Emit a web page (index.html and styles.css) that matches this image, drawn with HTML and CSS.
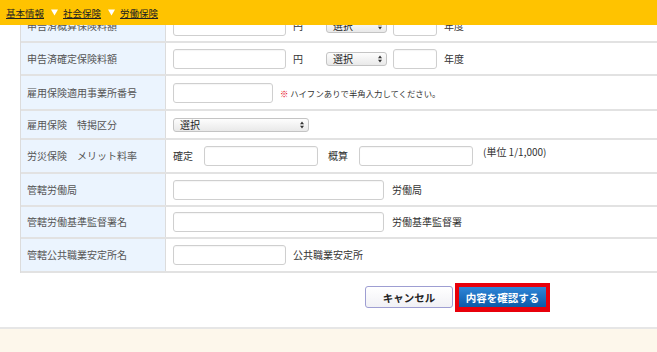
FILE: index.html
```html
<!DOCTYPE html>
<html lang="ja">
<head>
    <meta charset="UTF-8">
    <meta name="viewport" content="width=device-width, initial-scale=1.0">
    <title>労働保険</title>
    <link rel="stylesheet" href="styles.css">
</head>
<body>
    <header class="topbar">
        <nav class="crumbs">
            <a href="#">基本情報</a>
            <svg class="crumb-arrow" viewBox="0 0 8 7"><path d="M0 0H8L4 7Z" fill="#fff"/></svg>
            <a href="#">社会保険</a>
            <svg class="crumb-arrow" viewBox="0 0 8 7"><path d="M0 0H8L4 7Z" fill="#fff"/></svg>
            <a href="#">労働保険</a>
        </nav>
    </header>

    <main class="page">
        <div class="form-table">
            <div class="row h33">
                <div class="label">申告済概算保険料額</div>
                <div class="value">
                    <span class="field w113"></span>
                    <span class="unit">円</span>
                    <span class="select w61 ml-select"><span>選択</span><svg viewBox="0 0 5 9"><path d="M2.5 0L5 3.5H0ZM2.5 9L0 5.5H5Z" fill="#333"/></svg></span>
                    <span class="field w44 ml6"></span>
                    <span class="unit">年度</span>
                </div>
            </div>
            <div class="row h33">
                <div class="label">申告済確定保険料額</div>
                <div class="value">
                    <span class="field w113"></span>
                    <span class="unit">円</span>
                    <span class="select w61 ml-select"><span>選択</span><svg viewBox="0 0 5 9"><path d="M2.5 0L5 3.5H0ZM2.5 9L0 5.5H5Z" fill="#333"/></svg></span>
                    <span class="field w44 ml6"></span>
                    <span class="unit">年度</span>
                </div>
            </div>
            <div class="row h35">
                <div class="label">雇用保険適用事業所番号</div>
                <div class="value">
                    <span class="field w100"></span>
                    <span class="note"><em>※</em> ハイフンありで半角入力してください。</span>
                </div>
            </div>
            <div class="row h29">
                <div class="label">雇用保険　特掲区分</div>
                <div class="value">
                    <span class="select w136"><span>選択</span><svg viewBox="0 0 5 9"><path d="M2.5 0L5 3.5H0ZM2.5 9L0 5.5H5Z" fill="#333"/></svg></span>
                </div>
            </div>
            <div class="row h34">
                <div class="label">労災保険　メリット料率</div>
                <div class="value">
                    <span class="caption">確定</span>
                    <span class="field w114 ml11"></span>
                    <span class="caption ml10">概算</span>
                    <span class="field w114 ml11"></span>
                    <span class="caption ml10 raised">(単位 1/1,000)</span>
                </div>
            </div>
            <div class="row h33">
                <div class="label">管轄労働局</div>
                <div class="value">
                    <span class="field w211"></span>
                    <span class="unit ml8">労働局</span>
                </div>
            </div>
            <div class="row h32">
                <div class="label">管轄労働基準監督署名</div>
                <div class="value">
                    <span class="field w211"></span>
                    <span class="unit ml8">労働基準監督署</span>
                </div>
            </div>
            <div class="row h34">
                <div class="label">管轄公共職業安定所名</div>
                <div class="value">
                    <span class="field w113"></span>
                    <span class="unit">公共職業安定所</span>
                </div>
            </div>
        </div>

        <div class="actions">
            <button class="btn-cancel">キャンセル</button>
            <button class="btn-confirm">内容を確認する</button>
        </div>
    </main>

    <footer class="footer"></footer>
</body>
</html>
```

FILE: styles.css
```css
body {
    margin: 0;
    font-family: "Noto Sans CJK JP", "Noto Sans", sans-serif;
    color: #333;
    background: #fff;
    overflow: hidden;
}

/* top bar */
.topbar {
    position: fixed;
    top: 0;
    left: 0;
    right: 0;
    height: 25px;
    background: #ffc300;
    display: flex;
    align-items: center;
    padding-left: 6px;
    z-index: 10;
}
.crumbs {
    display: flex;
    align-items: center;
    font-size: 9.5px;
    line-height: 12px;
}
.crumbs a {
    color: #222;
    text-decoration: underline;
}
.crumb-arrow {
    width: 7px;
    height: 7px;
    margin: 0 5px 0 7px;
}

/* form */
.page {
    margin: 10px 0 0 20px;
}
.form-table {
    border-left: 1px solid #dcdcdc;
}
.row {
    display: flex;
    box-sizing: border-box;
    border-bottom: 2px solid #e2e2e2;
}
.h29 { height: 29px; }
.h32 { height: 32px; }
.h33 { height: 33px; }
.h34 { height: 34px; }
.h35 { height: 35px; }

.label {
    width: 145px;
    flex-shrink: 0;
    box-sizing: border-box;
    background: #ebf4fe;
    border-right: 1px solid #dcdcdc;
    display: flex;
    align-items: center;
    padding-left: 6px;
    font-size: 10px;
    line-height: 12px;
    color: #555;
    white-space: pre;
}
.value {
    flex: 1;
    display: flex;
    align-items: center;
    padding-left: 7px;
    font-size: 10px;
    line-height: 12px;
    color: #333;
}

.field {
    display: block;
    height: 20px;
    box-sizing: border-box;
    border: 1px solid #cfcfcf;
    border-radius: 3px;
    background: #fff;
    box-shadow: inset 0 1px 1px rgba(0, 0, 0, 0.04);
}
.w44 { width: 44px; }
.w61 { width: 61px; }
.w100 { width: 100px; }
.w113 { width: 113px; }
.w114 { width: 114px; }
.w136 { width: 136px; }
.w211 { width: 211px; }

.ml6 { margin-left: 6px; }
.ml8 { margin-left: 8px !important; }
.ml10 { margin-left: 10px; }
.ml11 { margin-left: 11px; }
.ml-select { margin-left: 23px; }

.unit {
    margin-left: 7px;
}
.caption.raised {
    align-self: flex-start;
    margin-top: 6px;
}

.select {
    display: flex;
    align-items: center;
    justify-content: space-between;
    height: 14px;
    box-sizing: border-box;
    border: 1px solid #c4c4c4;
    border-radius: 3px;
    background: linear-gradient(#fdfdfd, #e9e9e9);
    padding: 0 4px 0 6px;
    font-size: 10px;
    line-height: 12px;
    color: #222;
}
.select svg {
    width: 4px;
    height: 8px;
}

.note {
    margin-left: 7px;
    font-size: 8.4px;
    color: #333;
}
.note em {
    font-style: normal;
    color: #e60012;
}

/* buttons */
.actions {
    height: 54px;
    box-sizing: border-box;
    display: flex;
    align-items: flex-start;
    gap: 2px;
    padding: 10px 0 0 345px;
}
.btn-cancel {
    width: 88px;
    height: 22px;
    margin-top: 3px;
    border: 1px solid #9e9ed2;
    border-radius: 3px;
    background: linear-gradient(#ffffff, #f1f1f5);
    font-family: inherit;
    font-size: 10.5px;
    font-weight: bold;
    color: #222;
    padding: 0;
    cursor: pointer;
}
.btn-confirm {
    width: 95px;
    height: 29px;
    box-sizing: border-box;
    border: 4px solid #e8000b;
    border-bottom-width: 5px;
    background: linear-gradient(#2f86d8, #0b5aa8);
    font-family: inherit;
    font-size: 10.5px;
    font-weight: bold;
    color: #fff;
    padding: 0;
    cursor: pointer;
}

.footer {
    height: 40px;
    border-top: 2px solid #e6e6e6;
    background: #fdf7eb;
}
```
